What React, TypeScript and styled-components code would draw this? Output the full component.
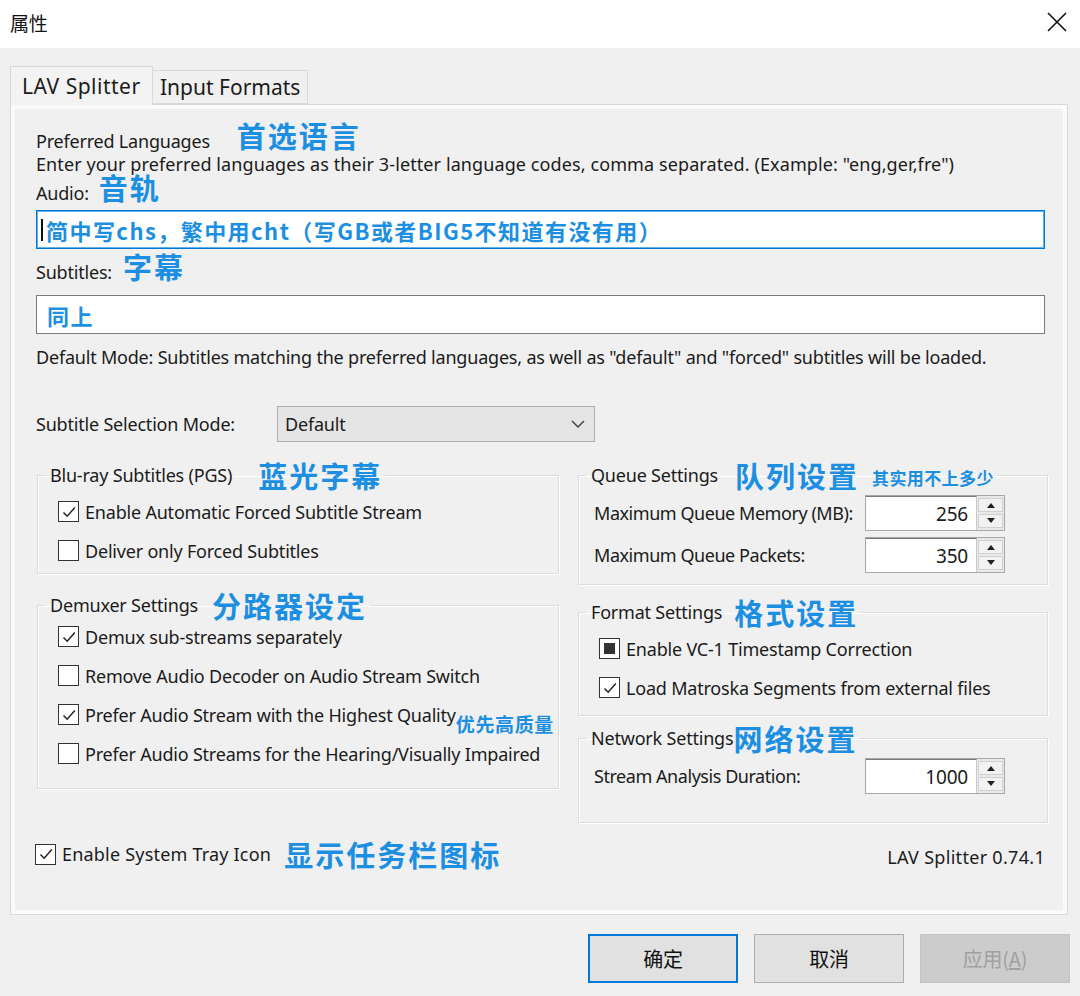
import React from "react";
import styled, { createGlobalStyle } from "styled-components";

const GlobalStyle = createGlobalStyle`
  html, body {
    margin: 0;
    padding: 0;
    background: #f0f0f0;
  }
  * {
    box-sizing: border-box;
  }
`;

const UI_FONT = `"Noto Sans", "Noto Sans CJK SC", sans-serif`;
const CJK_FONT = `"Noto Sans CJK SC", "Noto Sans", sans-serif`;
const NOTE_BLUE = "#1c8fe2";

const CloseIcon = () => (
  <svg width="20" height="20" viewBox="0 0 20 20">
    <path d="M1 1 L19 19 M19 1 L1 19" stroke="#111" strokeWidth="1.6" fill="none" />
  </svg>
);

const Chevron = () => (
  <svg width="16" height="10" viewBox="0 0 16 10">
    <path d="M2 2 L8 8 L14 2" stroke="#444" strokeWidth="1.5" fill="none" />
  </svg>
);

const CheckMark = () => (
  <svg width="16" height="16" viewBox="0 0 16 16">
    <path d="M2.5 8.5 L6.2 12.2 L13.8 3.6" stroke="#222" strokeWidth="1.5" fill="none" />
  </svg>
);

type CheckState = "on" | "off" | "mixed";

const Check = ({ state, label, note }: { state: CheckState; label: string; note?: string }) => (
  <CheckRow>
    <Box>
      {state === "on" && <CheckMark />}
      {state === "mixed" && <MixedFill />}
    </Box>
    <span>{label}</span>
    {note && <InlineNote>{note}</InlineNote>}
  </CheckRow>
);

const Spin = ({ value }: { value: string }) => (
  <SpinBox>
    <SpinField>{value}</SpinField>
    <SpinButtons>
      <SpinButton>
        <svg width="10" height="6" viewBox="0 0 10 6">
          <path d="M1 6 L5 1 L9 6 Z" fill="#222" />
        </svg>
      </SpinButton>
      <SpinButton>
        <svg width="10" height="6" viewBox="0 0 10 6">
          <path d="M1 0 L5 5 L9 0 Z" fill="#222" />
        </svg>
      </SpinButton>
    </SpinButtons>
  </SpinBox>
);

export default function App() {
  return (
    <Window>
      <GlobalStyle />
      <TitleBar>
        <Title>属性</Title>
        <CloseButton>
          <CloseIcon />
        </CloseButton>
      </TitleBar>
      <Body>
        <Tabs>
          <Tab active>LAV Splitter</Tab>
          <Tab>Input Formats</Tab>
        </Tabs>
        <Panel>
          <LabelLine>
            <span>Preferred Languages</span>
            <Note gap={27}>首选语言</Note>
          </LabelLine>
          <TextLine>
            Enter your preferred languages as their 3-letter language codes, comma separated. (Example: "eng,ger,fre")
          </TextLine>
          <LabelLine>
            <span>Audio:</span>
            <Note gap={10}>音轨</Note>
          </LabelLine>
          <Field focused>
            <Caret />
            简中写chs，繁中用cht（写GB或者BIG5不知道有没有用）
          </Field>
          <LabelLine tall>
            <span>Subtitles:</span>
            <Note gap={11}>字幕</Note>
          </LabelLine>
          <Field>同上</Field>
          <TextLine spaced>
            Default Mode: Subtitles matching the preferred languages, as well as "default" and "forced" subtitles will be loaded.
          </TextLine>

          <SelectRow>
            <span>Subtitle Selection Mode:</span>
            <Select>
              <span>Default</span>
              <Chevron />
            </Select>
          </SelectRow>

          <Columns>
            <Column>
              <Group height={114}>
                <Legend>
                  Blu-ray Subtitles (PGS)
                  <Note gap={26}>蓝光字幕</Note>
                </Legend>
                <Check state="on" label="Enable Automatic Forced Subtitle Stream" />
                <Check state="off" label="Deliver only Forced Subtitles" />
              </Group>
              <Group height={199} spacing={16} pull={5}>
                <Legend>
                  Demuxer Settings
                  <Note gap={14}>分路器设定</Note>
                </Legend>
                <Check state="on" label="Demux sub-streams separately" />
                <Check state="off" label="Remove Audio Decoder on Audio Stream Switch" />
                <Check state="on" label="Prefer Audio Stream with the Highest Quality" note="优先高质量" />
                <Check state="off" label="Prefer Audio Streams for the Hearing/Visually Impaired" />
              </Group>
            </Column>
            <Column>
              <Group height={125}>
                <Legend>
                  Queue Settings
                  <Note gap={17}>队列设置</Note>
                  <SmallNote>其实用不上多少</SmallNote>
                </Legend>
                <SpinRow>
                  <span>Maximum Queue Memory (MB):</span>
                  <Spin value="256" />
                </SpinRow>
                <SpinRow>
                  <span>Maximum Queue Packets:</span>
                  <Spin value="350" />
                </SpinRow>
              </Group>
              <Group height={119} spacing={12}>
                <Legend>
                  Format Settings
                  <Note gap={12}>格式设置</Note>
                </Legend>
                <Check state="mixed" label="Enable VC-1 Timestamp Correction" />
                <Check state="on" label="Load Matroska Segments from external files" />
              </Group>
              <Group height={100} spacing={7}>
                <Legend>
                  Network Settings
                  <Note gap={0}>网络设置</Note>
                </Legend>
                <SpinRow>
                  <span>Stream Analysis Duration:</span>
                  <Spin value="1000" />
                </SpinRow>
              </Group>
            </Column>
          </Columns>

          <FooterRow>
            <TrayCheck>
              <Check state="on" label="Enable System Tray Icon" />
              <Note gap={13}>显示任务栏图标</Note>
            </TrayCheck>
            <Version>LAV Splitter 0.74.1</Version>
          </FooterRow>
        </Panel>
        <Buttons>
          <DialogButton primary>确定</DialogButton>
          <DialogButton>取消</DialogButton>
          <DialogButton disabled>
            应用(<u>A</u>)
          </DialogButton>
        </Buttons>
      </Body>
    </Window>
  );
}

const Window = styled.div`
  width: 1080px;
  height: 996px;
  display: flex;
  flex-direction: column;
  font-family: ${UI_FONT};
  font-size: 18px;
  letter-spacing: -0.2px;
  color: #1b1b1b;
  background: #f0f0f0;
  overflow: hidden;
`;

const TitleBar = styled.div`
  height: 48px;
  background: #fff;
  display: flex;
  align-items: center;
  justify-content: space-between;
  padding: 0 13px 4px 10px;
`;

const Title = styled.div`
  font-family: ${CJK_FONT};
  font-size: 19px;
  color: #111;
`;

const CloseButton = styled.div`
  display: flex;
  align-items: center;
`;

const Body = styled.div`
  flex: 1;
  display: flex;
  flex-direction: column;
  padding: 18px 10px 0 10px;
`;

const Tabs = styled.div`
  display: flex;
  align-items: flex-end;
  height: 38px;
  position: relative;
  z-index: 1;
`;

const Tab = styled.div<{ active?: boolean }>`
  height: ${(p) => (p.active ? 39 : 34)}px;
  width: ${(p) => (p.active ? 143 : 155)}px;
  padding-left: ${(p) => (p.active ? 11 : 7)}px;
  display: flex;
  align-items: center;
  font-size: 21px;
  letter-spacing: ${(p) => (p.active ? 0.5 : 0)}px;
  background: ${(p) => (p.active ? "#f3f3f3" : "#f0f0f0")};
  border: 1px solid #d9d9d9;
  border-bottom: ${(p) => (p.active ? "none" : "1px solid #d9d9d9")};
  margin-bottom: ${(p) => (p.active ? -1 : 0)}px;
  white-space: nowrap;
  & + & {
    border-left: none;
  }
`;

const Panel = styled.div`
  height: 811px;
  margin-right: 2px;
  border: 1px solid #d9d9d9;
  box-shadow: inset 0 0 0 4px #fafafa;
  background: #f0f0f0;
  padding: 20px 22px 0 25px;
  display: flex;
  flex-direction: column;
`;

const LabelLine = styled.div<{ tall?: boolean }>`
  display: flex;
  align-items: baseline;
  height: ${(p) => (p.tall ? 39 : 30)}px;
  padding-top: ${(p) => (p.tall ? 3 : 0)}px;
  line-height: 26px;
`;

const Note = styled.span<{ gap: number }>`
  font-family: ${CJK_FONT};
  font-weight: 700;
  font-size: 29px;
  color: ${NOTE_BLUE};
  margin-left: ${(p) => p.gap}px;
  letter-spacing: 2px;
  line-height: 20px;
`;

const SmallNote = styled.span`
  font-family: ${CJK_FONT};
  font-weight: 700;
  font-size: 17px;
  color: ${NOTE_BLUE};
  margin-left: 13px;
  letter-spacing: 0.4px;
  line-height: 1;
  transform: translateY(2px);
`;

const InlineNote = styled.span`
  font-family: ${CJK_FONT};
  font-weight: 700;
  font-size: 19px;
  color: ${NOTE_BLUE};
  letter-spacing: 0.6px;
  line-height: 1;
  transform: translateY(9px);
`;

const TextLine = styled.div<{ spaced?: boolean }>`
  letter-spacing: ${(p) => (p.spaced ? -0.2 : 0.1)}px;
  line-height: 20px;
  margin-top: ${(p) => (p.spaced ? 9 : -1)}px;
  margin-bottom: ${(p) => (p.spaced ? 0 : 3)}px;
  white-space: nowrap;
`;

const Field = styled.div<{ focused?: boolean }>`
  height: 39px;
  margin: 3px 0 4px;
  background: #fff;
  border: 1px solid ${(p) => (p.focused ? "#0078d7" : "#7a7a7a")};
  box-shadow: ${(p) => (p.focused ? "inset 0 0 0 1px #5fb2ea" : "none")};
  display: flex;
  align-items: center;
  padding-left: ${(p) => (p.focused ? 4 : 10)}px;
  font-family: ${CJK_FONT};
  font-weight: 700;
  font-size: 22px;
  color: ${NOTE_BLUE};
  letter-spacing: 1.45px;
`;

const Caret = styled.span`
  width: 2px;
  height: 22px;
  background: #111;
  margin-right: 3px;
`;

const SelectRow = styled.div`
  display: flex;
  align-items: center;
  margin-top: 39px;
  height: 36px;
  & > span:first-child {
    width: 241px;
  }
`;

const Select = styled.div`
  width: 318px;
  height: 36px;
  background: #e5e5e5;
  border: 1px solid #adadad;
  display: flex;
  align-items: center;
  justify-content: space-between;
  padding: 0 8px 0 7px;
`;

const Columns = styled.div`
  display: grid;
  grid-template-columns: 522px 470px;
  column-gap: 19px;
  margin-top: 18px;
  margin-left: 1px;
`;

const Column = styled.div`
  display: flex;
  flex-direction: column;
`;

const Group = styled.fieldset<{ height: number; spacing?: number; pull?: number }>`
  height: ${(p) => p.height}px;
  margin: ${(p) => p.spacing ?? 0}px 0 0 0;
  padding: 2px 0 0 20px;
  border: 1px solid #dcdcdc;
  border-radius: 0;
  box-shadow: 1px 1px 0 #fff, inset 1px 1px 0 #fff;
  min-width: 0;
  display: flex;
  flex-direction: column;
  & > legend {
    margin-bottom: ${(p) => -(p.pull ?? 0)}px;
  }
`;

const Legend = styled.legend`
  display: flex;
  align-items: center;
  padding: 0 3px 0 5px;
  margin-left: -13px;
  height: 30px;
  white-space: nowrap;
`;

const CheckRow = styled.div`
  display: flex;
  align-items: center;
  height: 39px;
  white-space: nowrap;
`;

const Box = styled.span`
  width: 21px;
  height: 21px;
  border: 1.5px solid #333;
  background: #fff;
  margin-right: 6px;
  display: flex;
  align-items: center;
  justify-content: center;
  flex-shrink: 0;
`;

const MixedFill = styled.span`
  width: 11px;
  height: 11px;
  background: #333;
`;

const SpinRow = styled.div`
  display: flex;
  align-items: center;
  height: 42px;
  & > span:first-child {
    width: 271px;
    margin-left: -5px;
    letter-spacing: -0.45px;
  }
`;

const SpinBox = styled.div`
  display: flex;
  height: 36px;
  width: 140px;
  border: 1px solid #a8a8a8;
  background: #e9e9e9;
`;

const SpinField = styled.div`
  flex: 1;
  background: #fff;
  border-right: 1px solid #c8c8c8;
  border-top: 1px solid #7a7a7a;
  display: flex;
  align-items: center;
  justify-content: flex-end;
  padding-right: 8px;
  font-size: 19px;
`;

const SpinButtons = styled.div`
  width: 27px;
  display: flex;
  flex-direction: column;
  gap: 2px;
  padding: 2px 1px;
`;

const SpinButton = styled.div`
  flex: 1;
  background: #f2f2f2;
  border: 1px solid #d0d0d0;
  display: flex;
  align-items: center;
  justify-content: center;
`;

const FooterRow = styled.div`
  display: flex;
  align-items: center;
  justify-content: space-between;
  margin-top: 11px;
  height: 40px;
`;

const TrayCheck = styled.div`
  display: flex;
  align-items: center;
  margin-left: -1px;
  & > div {
    letter-spacing: 0.2px;
  }
`;

const Version = styled.div`
  letter-spacing: 0.3px;
  padding-top: 6px;
`;

const Buttons = styled.div`
  display: flex;
  justify-content: flex-end;
  gap: 16px;
  margin-top: 19px;
  padding-right: 0;
`;

const DialogButton = styled.div<{ primary?: boolean; disabled?: boolean }>`
  width: 150px;
  height: 49px;
  display: flex;
  align-items: center;
  justify-content: center;
  font-family: ${CJK_FONT};
  font-size: 20px;
  color: ${(p) => (p.disabled ? "#a0a0a0" : "#111")};
  background: ${(p) => (p.disabled ? "#cccccc" : "#e1e1e1")};
  border: ${(p) => (p.primary ? "2px solid #0078d7" : p.disabled ? "1px solid #c4c4c4" : "1px solid #adadad")};
  u {
    text-decoration: underline;
  }
`;
